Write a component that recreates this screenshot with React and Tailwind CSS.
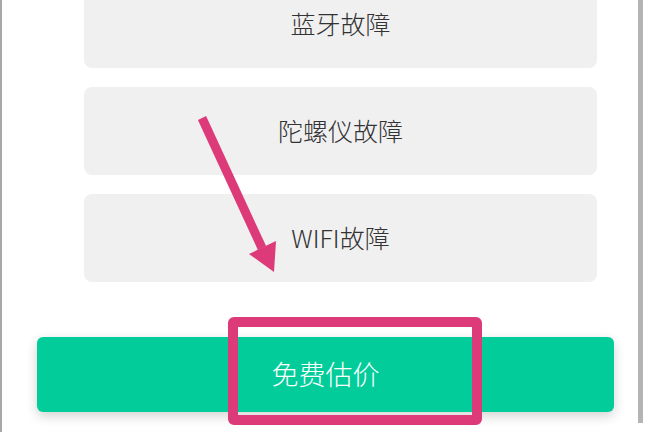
import React from 'react';

const faults = ['蓝牙故障', '陀螺仪故障', 'WIFI故障'];

export default function App() {
    return (
        <div
            className="relative w-[650px] h-[432px] overflow-hidden bg-white flex"
            style={{ fontFamily: '"Noto Sans CJK SC", "Noto Sans", sans-serif' }}
        >
            {/* Page column */}
            <div className="w-[638px] h-full border-l-2 border-[#a8a8a8] flex flex-col">
                {/* Fault options */}
                <div className="flex flex-col gap-[19px] mt-[-20px] ml-[82px] w-[513px]">
                    {faults.map((label) => (
                        <div
                            key={label}
                            className="h-[88px] rounded-lg bg-[#f0f0f0] flex items-center justify-center text-[25px] font-light text-[#333333]"
                        >
                            {label}
                        </div>
                    ))}
                </div>

                {/* Submit */}
                <button className="mt-[55px] ml-[35px] w-[577px] h-[75px] rounded-md bg-[#02cd9a] text-white text-[27px] font-light shadow-[0_4px_12px_rgba(0,0,0,0.18)] flex items-center justify-center">
                    免费估价
                </button>
            </div>

            {/* Scroll bar */}
            <div className="w-[5px] h-[423px] bg-[#b4b4b4]" />

            {/* Annotation: highlight box */}
            <div className="absolute left-[228px] top-[317px] w-[254px] h-[108px] border-[10px] border-[#dc3a78] rounded-md" />

            {/* Annotation: arrow */}
            <svg className="absolute inset-0 pointer-events-none" width="650" height="432" viewBox="0 0 650 432">
                <line x1="202" y1="118" x2="262" y2="248" stroke="#dc3a78" strokeWidth="9" />
                <polygon points="249,254 276,241 274,272" fill="#dc3a78" />
            </svg>
        </div>
    );
}
